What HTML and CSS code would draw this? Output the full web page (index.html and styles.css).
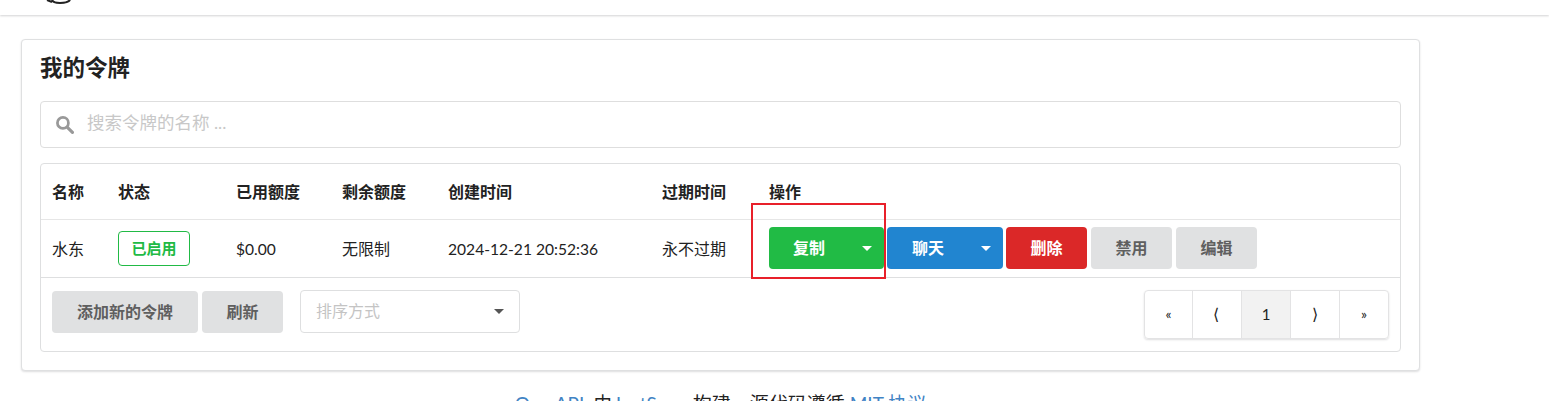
FILE: index.html
```html
<!DOCTYPE html>
<html lang="zh">
<head>
<meta charset="utf-8">
<title>我的令牌</title>
<link rel="stylesheet" href="styles.css">
</head>
<body>
<header class="topbar">
  <svg class="logo" width="30" height="15" viewBox="0 0 30 15"><path d="M3 0 L8 2" fill="none" stroke="#222" stroke-width="2"/><path d="M8 0 Q9 3 16 3 Q24 3 26 0" fill="none" stroke="#222" stroke-width="2.2"/></svg>
</header>
<main class="page">
  <section class="card">
    <h2 class="title">我的令牌</h2>
    <div class="search">
      <svg class="search-icon" width="19" height="19" viewBox="0 0 18 18"><circle cx="7.5" cy="7.5" r="5.2" fill="none" stroke="#999" stroke-width="2.6"/><path d="M11.5 11.5 L16.5 16.5" stroke="#999" stroke-width="3" stroke-linecap="round"/></svg>
      <span class="placeholder">搜索令牌的名称 ...</span>
    </div>
    <div class="tablebox">
      <table class="tokens">
        <colgroup>
          <col class="c1"><col class="c2"><col class="c3"><col class="c4"><col class="c5"><col class="c6"><col>
        </colgroup>
        <thead>
          <tr><th>名称</th><th>状态</th><th>已用额度</th><th>剩余额度</th><th>创建时间</th><th>过期时间</th><th>操作</th></tr>
        </thead>
        <tbody>
          <tr>
            <td>水东</td>
            <td><span class="badge">已启用</span></td>
            <td class="num">$0.00</td>
            <td>无限制</td>
            <td class="num">2024-12-21 20:52:36</td>
            <td>永不过期</td>
            <td class="actions">
              <div class="btns">
                <button class="btn split green"><span class="lbl">复制</span><i class="caret"></i></button>
                <button class="btn split blue"><span class="lbl">聊天</span><i class="caret"></i></button>
                <button class="btn red w81">删除</button>
                <button class="btn grey w81 gap4">禁用</button>
                <button class="btn grey w81 gap4">编辑</button>
              </div>
              <div class="annotation"></div>
            </td>
          </tr>
        </tbody>
      </table>
      <div class="tfoot">
        <button class="btn grey add">添加新的令牌</button>
        <button class="btn grey w81 gap4">刷新</button>
        <div class="select"><span>排序方式</span><i class="caret dark"></i></div>
        <nav class="pager">
          <a>«</a><a class="big">⟨</a><a class="on">1</a><a class="big">⟩</a><a>»</a>
        </nav>
      </div>
    </div>
  </section>
  <footer class="foot"><a>One API</a> <span class="by">由</span> <a>JustSong</a> 构建，源代码遵循 <a>MIT 协议</a></footer>
</main>
</body>
</html>
```
FILE: styles.css
```css
* { box-sizing: border-box; }
html, body { margin: 0; height: 401px; overflow: hidden; background: #fff; }
body {
  font-family: Lato, "Noto Sans CJK SC", sans-serif;
  font-size: 14px;
  line-height: 20px;
  color: rgba(0,0,0,.87);
}
.topbar {
  height: 15px;
  background: #fff;
  box-shadow: 0 1px 2px rgba(34,36,38,.2);
  padding-left: 44px;
}
.logo { display: block; }
.page { width: 1399px; margin: 24px 0 0 21px; }
.card {
  height: 332px;
  border: 1px solid #dfe0e1;
  border-radius: 4px;
  box-shadow: 0 1px 2px rgba(34,36,38,.15);
  padding: 13px 18px 0;
  background: #fff;
}
.title {
  margin: 0;
  height: 30px;
  font-size: 22.5px;
  line-height: 30px;
  font-weight: 700;
  color: #222;
}
.search {
  margin-top: 18px;
  height: 47px;
  border: 1px solid #dedede;
  border-radius: 4px;
  display: flex;
  align-items: center;
  padding-left: 15px;
}
.search-icon { flex: none; margin-left: -1px; margin-top: -1px; }
.placeholder { margin-left: 13px; margin-top: -3px; font-size: 17.5px; color: #c8c8c8; }
.tablebox {
  margin-top: 15px;
  height: 189px;
  border: 1px solid #dedfe0;
  border-radius: 4px;
}
.tokens { width: 100%; border-collapse: collapse; table-layout: fixed; }
.c1 { width: 66px; } .c2 { width: 118px; } .c3 { width: 106px; }
.c4 { width: 106px; } .c5 { width: 214px; } .c6 { width: 107px; }
.tokens th {
  height: 55px;
  padding: 2px 11px 0;
  text-align: left;
  font-size: 16px;
  font-weight: 700;
  color: #222;
  border-bottom: 1px solid #e6e6e6;
  white-space: nowrap;
}
.tokens td {
  height: 58px;
  padding: 2px 11px 0;
  font-size: 16px;
  color: #222;
  border-bottom: 1px solid #dedfe0;
  white-space: nowrap;
}
.tokens td.actions { padding-top: 0; }
.tokens td.num { font-size: 15.6px; }
.badge {
  display: block;
  width: 72px;
  height: 35px;
  margin-top: -2px;
  line-height: 32px;
  text-align: center;
  font-size: 15px;
  font-weight: 700;
  color: #21ba45;
  border: 1px solid #21ba45;
  border-radius: 4px;
}
.actions { position: relative; }
.btns { display: flex; }
.btn {
  height: 42px;
  border: 0;
  border-radius: 4px;
  padding: 0;
  font: 700 16px/42px Lato, "Noto Sans CJK SC", sans-serif;
  text-align: center;
  cursor: pointer;
}
.split {
  display: flex;
  align-items: center;
  color: #fff;
  width: 115px;
  padding-left: 24px;
}
.split .lbl { width: 32px; }
.split .caret { margin-left: 37px; }
.blue { width: 116px; margin-left: 3px; background: #2185d0; padding-left: 25px; }
.green { background: #21bb45; }
.red { background: #db2828; color: #fff; margin-left: 3px; }
.grey { background: #e0e1e2; color: #5f5f5f; }
.w81 { width: 81px; }
.gap4 { margin-left: 4px; }
.caret {
  display: block;
  width: 0;
  height: 0;
  border-left: 5px solid transparent;
  border-right: 5px solid transparent;
  border-top: 5px solid #fff;
}
.caret.dark { border-top-color: #555; }
.annotation {
  position: absolute;
  left: -7px;
  top: -17px;
  width: 135px;
  height: 76px;
  border: 2px solid #e8202a;
  pointer-events: none;
}
.tfoot {
  display: flex;
  align-items: flex-start;
  padding: 12px 11px 0;
}
.add { width: 146px; margin-top: 1px; }
.tfoot .gap4 { margin-top: 1px; }
.select {
  margin-left: 17px;
  width: 220px;
  height: 43px;
  border: 1px solid #dedfe0;
  border-radius: 4px;
  padding: 0 15px;
  display: flex;
  align-items: center;
  justify-content: space-between;
  font-size: 16px;
  color: #c4c4c4;
}
.pager {
  margin-left: auto;
  display: flex;
  height: 49px;
  border: 1px solid #e3e3e4;
  border-radius: 4px;
  box-shadow: 0 1px 2px rgba(34,36,38,.15);
  overflow: hidden;
}
.pager a {
  width: 49px;
  display: flex;
  align-items: center;
  justify-content: center;
  font-size: 14px;
  color: #222;
  border-left: 1px solid #e3e3e4;
}
.pager a:first-child { border-left: 0; width: 47px; }
.pager .big { font-size: 16px; padding-right: 3px; }
.pager .big:nth-child(4) { padding: 0; }
.pager .on { background: #f2f2f2; font-size: 15px; }
.foot {
  margin-top: 21px;
  text-align: center;
  font-size: 19px;
  line-height: 24px;
  color: #222;
}
.foot a { color: #4183c4; }
.by { margin: 0 -4px 0 4px; }
```
